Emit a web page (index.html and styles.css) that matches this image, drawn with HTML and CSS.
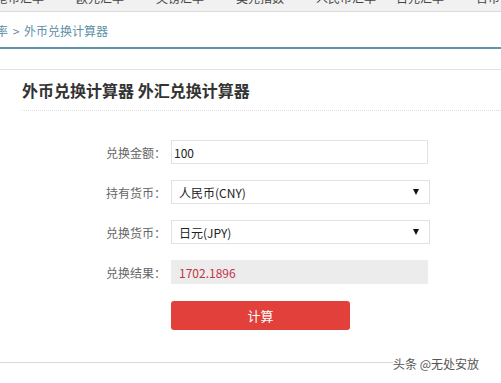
FILE: index.html
```html
<!DOCTYPE html>
<html lang="zh">
<head>
<meta charset="utf-8">
<link rel="stylesheet" href="styles.css">
</head>
<body>
<div class="topnav">
  <span class="nav-item first">港币汇率</span>
  <span class="nav-item">欧元汇率</span>
  <span class="nav-item">英镑汇率</span>
  <span class="nav-item">美元指数</span>
  <span class="nav-item">人民币汇率</span>
  <span class="nav-item">日元汇率</span>
  <span class="nav-item">台币</span>
</div>
<div class="crumb"><span class="crumb-text">率 &gt; 外币兑换计算器</span></div>
<div class="panel">
  <h1 class="title">外币兑换计算器 外汇兑换计算器</h1>
  <div class="form">
    <div class="row">
      <label class="label">兑换金额：</label>
      <div class="field input">100</div>
    </div>
    <div class="row">
      <label class="label">持有货币：</label>
      <div class="field select"><span>人民币(CNY)</span><span class="arrow"></span></div>
    </div>
    <div class="row">
      <label class="label">兑换货币：</label>
      <div class="field select"><span>日元(JPY)</span><span class="arrow"></span></div>
    </div>
    <div class="row">
      <label class="label">兑换结果：</label>
      <div class="field result">1702.1896</div>
    </div>
    <div class="row btn-row">
      <span class="label"></span>
      <button class="btn">计算</button>
    </div>
  </div>
  <div class="footer">
    <div class="footer-line"></div>
    <div class="watermark">头条 @无处安放</div>
  </div>
</div>
</body>
</html>
```
FILE: styles.css
```css
* { box-sizing: border-box; }
html, body { margin: 0; padding: 0; background: #fff; }
body {
  width: 501px;
  height: 383px;
  overflow: hidden;
  font-family: "Noto Sans CJK SC", "Microsoft YaHei", sans-serif;
  color: #333;
}
.topnav {
  height: 12px;
  background: #f1f1f1;
  border-bottom: 1px solid #dcdcdc;
  overflow: hidden;
  display: flex;
}
.nav-item {
  font-size: 12px;
  line-height: 12px;
  margin-top: -8px;
  color: #444;
  white-space: nowrap;
  flex: none;
  width: 80px;
}
.nav-item.first { margin-left: -4px; }
.crumb {
  height: 37px;
  border-bottom: 2px solid #6193a8;
  display: flex;
  align-items: center;
  overflow: hidden;
  padding-top: 1px;
}
.crumb-text {
  margin-left: -4px;
  font-size: 12px;
  color: #5d8fa5;
  white-space: pre;
  word-spacing: 2px;
}
.panel {
  margin-top: 20px;
  border-top: 1px solid #e3e3e3;
}
.title {
  margin: 0 0 0 22px;
  height: 41px;
  display: flex;
  align-items: center;
  font-size: 16px;
  font-weight: bold;
  color: #333;
  border-bottom: 1px dotted #dcdcdc;
}
.form {
  margin-top: 29px;
  display: flex;
  flex-direction: column;
  gap: 16px;
}
.row {
  display: flex;
  align-items: center;
  gap: 5px;
}
.label {
  width: 166px;
  text-align: right;
  font-size: 12px;
  color: #666;
  flex: none;
}
.field {
  height: 24px;
  border: 1px solid #e2e2e2;
  font-size: 12px;
  display: flex;
  align-items: center;
}
.input {
  width: 257px;
  padding-left: 2px;
  color: #222;
}
.select {
  width: 259px;
  padding: 0 10px 0 7px;
  justify-content: space-between;
  color: #222;
}
.arrow {
  width: 0;
  height: 0;
  border-left: 3px solid transparent;
  border-right: 3px solid transparent;
  border-top: 6px solid #111;
}
.result {
  width: 257px;
  background: #ececec;
  border-color: #ececec;
  padding-left: 7px;
  color: #c0354a;
}
.btn-row { margin-top: 1px; }
.btn {
  width: 179px;
  height: 29px;
  border: none;
  border-radius: 3px;
  background: #e2403b;
  color: #fff;
  font-family: inherit;
  font-size: 13px;
  padding: 0;
}
.footer {
  margin-top: 25px;
  display: flex;
  align-items: center;
  height: 14px;
}
.footer-line {
  width: 393px;
  border-top: 1px solid #d8d8d8;
}
.watermark {
  flex: none;
  font-size: 12px;
  color: #555;
  white-space: nowrap;
  padding-top: 3px;
}
```
